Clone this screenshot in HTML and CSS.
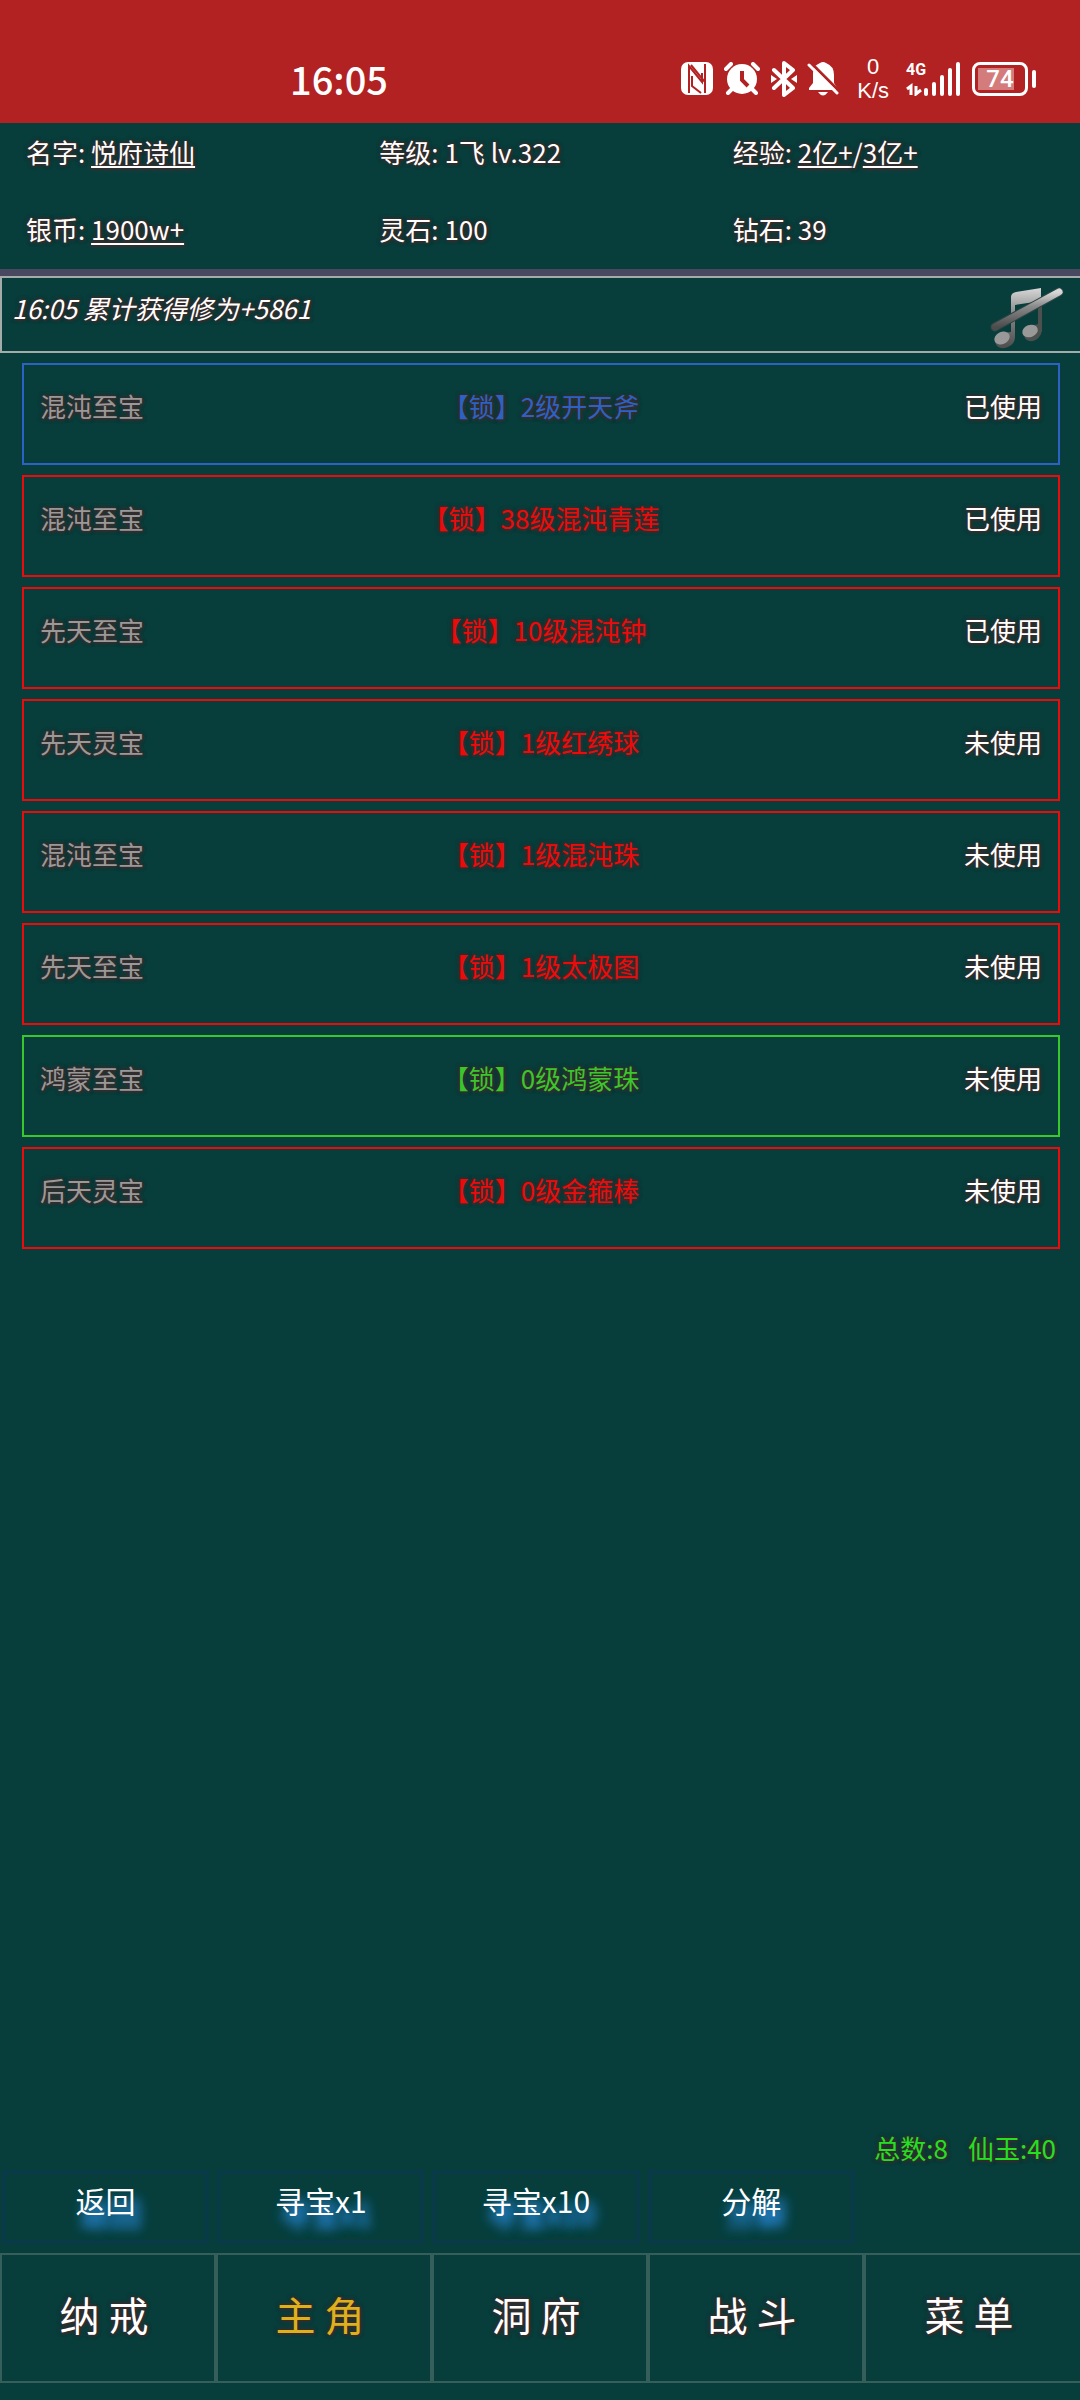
FILE: index.html
```html
<!DOCTYPE html>
<html lang="zh-CN">
<head>
  <meta charset="UTF-8">
  <meta name="viewport" content="width=device-width, initial-scale=1.0">
  <title>修仙 - 法宝</title>
  <link rel="stylesheet" href="styles.css">
</head>
<body>
  <!-- 状态栏 -->
  <div class="status-bar">
    <span class="clock">16:05</span>
    <div class="status-icons">
      <svg class="nfc" width="32" height="33" viewBox="0 0 32 33">
        <rect x="0" y="0" width="32" height="33" rx="7" fill="#fff"/>
        <path d="M8 31V4L21 20V11M10 3L24 20V31M24 2V20M11 14V24L20 31" fill="none" stroke="#b22222" stroke-width="2"/>
      </svg>
      <svg class="alarm" width="36" height="33" viewBox="0 0 36 33">
        <circle cx="18" cy="17" r="15" fill="#fff"/>
        <path d="M2 7l5-5M34 7l-5-5M8 27l-4 4M28 27l4 4" stroke="#fff" stroke-width="4" stroke-linecap="round"/>
        <path d="M18 9v9l6 6" fill="none" stroke="#b22222" stroke-width="4"/>
      </svg>
      <svg class="bluetooth" width="26" height="36" viewBox="0 0 26 36">
        <path d="M3 9l19 18-9 7V2l9 7L3 27" fill="none" stroke="#fff" stroke-width="4" stroke-linejoin="round" stroke-linecap="round"/>
        <path d="M0 14l6 4-6 4zM26 14l-6 4 6 4z" fill="#fff"/>
      </svg>
      <svg class="mute" width="32" height="34" viewBox="0 0 32 34">
        <path d="M8 4Q11 2 13 1Q16-1 19 1Q27 4 27 13V21L30 26V28H2V26L6 21V11Q6 7 8 4Z" fill="#fff"/>
        <path d="M11 30h10q-5 7-10 0z" fill="#fff"/>
        <path d="M3 0l30 30" stroke="#b22222" stroke-width="3"/>
        <path d="M2 3l28 28" stroke="#fff" stroke-width="3" stroke-linecap="round"/>
      </svg>
      <div class="net-speed"><span>0</span><span>K/s</span></div>
      <div class="signal">
        <span class="net-type">4G</span>
        <svg width="54" height="34" viewBox="0 0 54 34">
          <path d="M1 27l4-3v9M10 24v8l5-4" fill="none" stroke="#fff" stroke-width="3"/>
          <path d="M20 28v4M28 22v10M36 15v17M44 8v24M52 2v30" stroke="#fff" stroke-width="4" stroke-linecap="round"/>
        </svg>
      </div>
      <div class="battery"><span>74</span></div>
    </div>
  </div>

  <!-- 角色信息 -->
  <div class="info">
    <div>名字: <u>悦府诗仙</u></div>
    <div>等级: 1飞 lv.322</div>
    <div>经验: <u>2亿+</u>/<u>3亿+</u></div>
    <div>银币: <u>1900w+</u></div>
    <div>灵石: 100</div>
    <div>钻石: 39</div>
  </div>

  <!-- 消息 -->
  <div class="message">
    <span class="message-text">16:05 累计获得修为+5861</span>
    <button class="music" aria-label="音乐开关">
      <svg width="74" height="62" viewBox="0 0 74 62">
        <defs>
          <linearGradient id="metal" x1="0" y1="0" x2="0" y2="1">
            <stop offset="0" stop-color="#d8d8d8"/>
            <stop offset="0.4" stop-color="#8c8c8c"/>
            <stop offset="1" stop-color="#4c4c4c"/>
          </linearGradient>
        </defs>
        <path d="M21 45V10Q21 6 26 5L51 1V14L25 18V50Q25 57 18 60Q8 64 5 55Q8 45 21 45Z" fill="url(#metal)"/>
        <path d="M52 12V44Q50 52 43 54Q35 55 34 48Q36 39 48 37V12Z" fill="#4c5150"/>
        <ellipse cx="12" cy="51" rx="8" ry="6" transform="rotate(-25 12 51)" fill="#999"/>
        <ellipse cx="40" cy="44" rx="8" ry="6" transform="rotate(-20 40 44)" fill="#999"/>
        <path d="M5 40L69 5" stroke="#2c4544" stroke-width="9" stroke-linecap="round"/>
        <path d="M5 40L69 5" stroke="url(#metal)" stroke-width="7" stroke-linecap="round"/>
      </svg>
    </button>
  </div>

  <!-- 法宝列表 -->
  <ul class="list">
    <li class="item blue"><span class="type">混沌至宝</span><span class="name">【锁】2级开天斧</span><span class="state">已使用</span></li>
    <li class="item red"><span class="type">混沌至宝</span><span class="name">【锁】38级混沌青莲</span><span class="state">已使用</span></li>
    <li class="item red"><span class="type">先天至宝</span><span class="name">【锁】10级混沌钟</span><span class="state">已使用</span></li>
    <li class="item red"><span class="type">先天灵宝</span><span class="name">【锁】1级红绣球</span><span class="state">未使用</span></li>
    <li class="item red"><span class="type">混沌至宝</span><span class="name">【锁】1级混沌珠</span><span class="state">未使用</span></li>
    <li class="item red"><span class="type">先天至宝</span><span class="name">【锁】1级太极图</span><span class="state">未使用</span></li>
    <li class="item green"><span class="type">鸿蒙至宝</span><span class="name">【锁】0级鸿蒙珠</span><span class="state">未使用</span></li>
    <li class="item red"><span class="type">后天灵宝</span><span class="name">【锁】0级金箍棒</span><span class="state">未使用</span></li>
  </ul>

  <div class="total"><span>总数:8</span><span>仙玉:40</span></div>

  <!-- 操作按钮 -->
  <div class="actions">
    <button>返回</button>
    <button>寻宝x1</button>
    <button>寻宝x10</button>
    <button>分解</button>
  </div>

  <!-- 底部导航 -->
  <nav class="nav">
    <button>纳 戒</button>
    <button class="active">主 角</button>
    <button>洞 府</button>
    <button>战 斗</button>
    <button>菜 单</button>
  </nav>
</body>
</html>
```
FILE: styles.css
```css
* {
  box-sizing: border-box;
}

body {
  margin: 0;
  min-height: 100vh;
  display: flex;
  flex-direction: column;
  background: #073e3c;
  color: white;
  font-family: "Noto Sans CJK SC", sans-serif;
  font-size: 26px;
  line-height: 40px;
  text-shadow: 0 0 3px #3a2c2c, 1px 1px 3px #3a2c2c, 0 0 4px #3a2c2c, 0 0 4px #3a2c2c;
}

button {
  margin: 0;
  padding: 0;
  background: none;
  border: none;
  color: inherit;
  font: inherit;
  text-shadow: inherit;
  cursor: pointer;
}

/* 状态栏 */
.status-bar {
  height: 123px;
  padding: 34px 52px 0 290px;
  display: flex;
  justify-content: space-between;
  align-items: center;
  background: #b22222;
  text-shadow: none;
}

.clock {
  font-size: 38px;
  font-weight: 500;
}

.status-icons {
  display: flex;
  align-items: center;
}

.alarm {
  margin-left: 11px;
}

.bluetooth {
  margin-left: 11px;
}

.mute {
  margin-left: 10px;
}

.net-speed {
  margin-left: 18px;
  display: flex;
  flex-direction: column;
  align-items: center;
  font-family: "Liberation Sans", sans-serif;
  font-size: 22px;
  line-height: 24px;
}

.signal {
  position: relative;
  height: 34px;
  margin-left: 17px;
}

.net-type {
  position: absolute;
  top: 0;
  left: 0;
  font-family: Roboto, sans-serif;
  font-size: 16px;
  font-weight: 700;
  line-height: 16px;
}

.signal svg {
  display: block;
}

.battery {
  position: relative;
  width: 56px;
  height: 34px;
  margin-left: 12px;
  border: 3px solid white;
  border-radius: 8px;
  background: linear-gradient(#d47b7b, #d47b7b) 3px 3px / 36px 22px no-repeat;
  text-align: center;
  font-family: Roboto, sans-serif;
  font-size: 24px;
  font-weight: 500;
  line-height: 28px;
}

.battery::after {
  content: "";
  position: absolute;
  top: 5px;
  right: -11px;
  width: 4px;
  height: 18px;
  border-radius: 2px;
  background: white;
}

/* 角色信息 */
.info {
  padding: 9px 10px 20px;
  display: grid;
  grid-template-columns: repeat(3, 1fr);
  row-gap: 37px;
  border-bottom: 7px solid #484860;
}

.info div {
  padding-left: 16px;
}

u {
  text-underline-offset: 3px;
}

/* 消息 */
.message {
  height: 77px;
  padding: 0 16px 0 10px;
  display: flex;
  justify-content: space-between;
  border: 2px solid #a4acaa;
  border-right: none;
}

.message-text {
  padding-top: 10px;
  font-style: italic;
}

.music {
  padding-top: 6px;
}

.music svg {
  display: block;
}

/* 法宝列表 */
.list {
  margin: 10px 20px 0 22px;
  padding: 0;
  display: flex;
  flex-direction: column;
  gap: 10px;
  list-style: none;
}

.item {
  height: 102px;
  padding: 21px 16px;
  display: grid;
  grid-template-columns: 1fr auto 1fr;
  border: 2px solid;
}

.type {
  color: #999;
}

.state {
  color: white;
  text-align: right;
}

.blue {
  color: #2b62c4;
}

.red {
  color: #ec0a0a;
}

.green {
  color: #38c82c;
}

.total {
  margin-top: auto;
  padding: 0 24px 2px 0;
  display: flex;
  justify-content: flex-end;
  gap: 20px;
  color: #22e022;
}

/* 操作按钮 */
.actions {
  padding: 0 10px 9px 2px;
  display: grid;
  grid-template-columns: repeat(5, 1fr);
  column-gap: 8px;
}

.actions button {
  height: 74px;
  padding-bottom: 14px;
  border: 4px solid #083a48;
  font-size: 30px;
  text-shadow: 5px 12px 12px #2684d0, 5px 12px 12px #2684d0;
}

/* 底部导航 */
.nav {
  margin-bottom: 17px;
  display: grid;
  grid-template-columns: repeat(5, 1fr);
}

.nav button {
  height: 130px;
  padding: 0 8px 8px 0;
  border: 2px solid #365f5c;
  font-size: 40px;
}

.nav button:last-child {
  border-right: none;
}

.nav .active {
  color: #ddb01c;
}
```
